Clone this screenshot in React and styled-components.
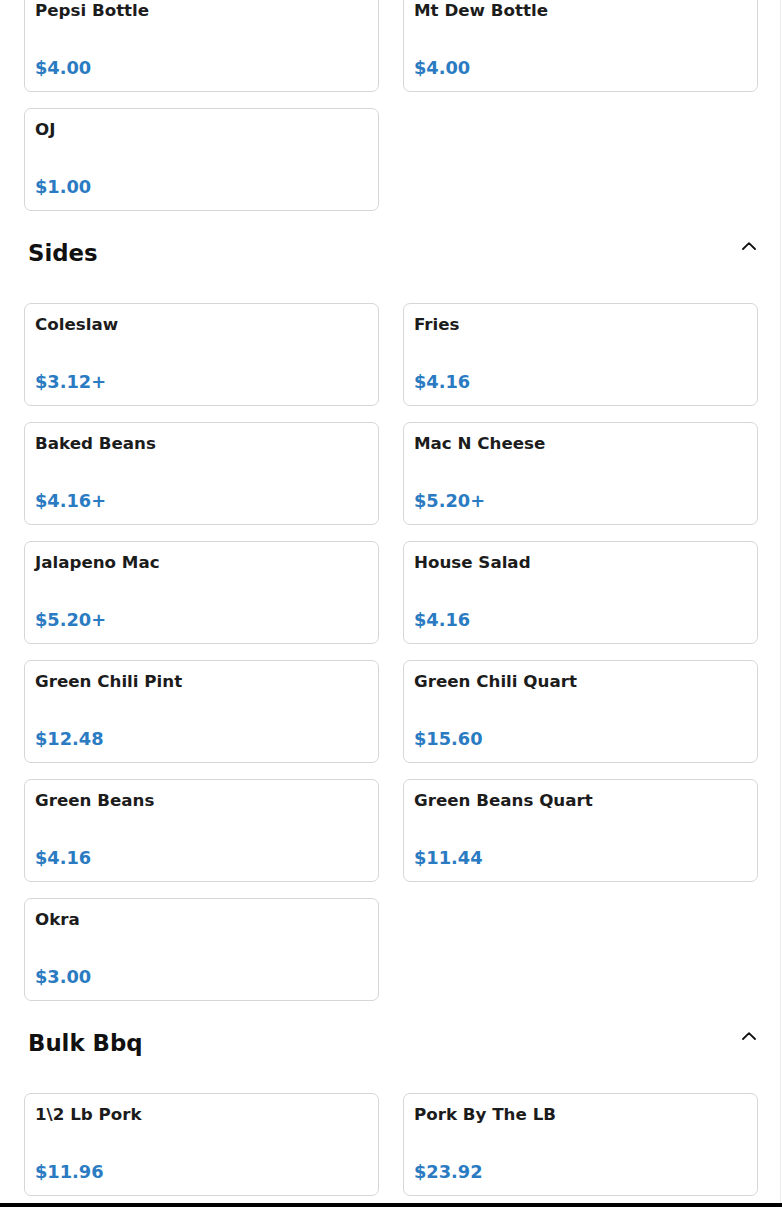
import styled, { createGlobalStyle } from "styled-components";

const GlobalStyle = createGlobalStyle`
  * { box-sizing: border-box; }
  body {
    margin: 0;
    background: #ffffff;
    font-family: "DejaVu Sans", "Liberation Sans", sans-serif;
  }
`;

const Page = styled.div`
  width: 781px;
  border-right: 1px solid #ececec;
  padding: 0 22px 40px 24px;
  margin-top: -11px;
`;

const Section = styled.section`
  &:not(:first-child) {
    margin-top: 28px;
  }
`;

const SectionHead = styled.div`
  display: flex;
  justify-content: space-between;
  align-items: flex-start;
  padding: 0 2px 0 4px;
  margin-bottom: 36px;
`;

const SectionTitle = styled.h2`
  margin: 0;
  font-size: 22.8px;
  line-height: 28px;
  font-weight: bold;
  color: #111;
`;

const Toggle = styled.button`
  border: none;
  background: none;
  padding: 0;
  margin-top: 3px;
  width: 14px;
  height: 8px;
  display: flex;
  cursor: pointer;
`;

const Grid = styled.div`
  display: grid;
  grid-template-columns: 1fr 1fr;
  column-gap: 24px;
  row-gap: 16px;
`;

const Card = styled.div`
  height: 103px;
  border: 1px solid #d6d6d6;
  border-radius: 7px;
  padding: 10px 10px 12px 10px;
  display: flex;
  flex-direction: column;
  background: #fff;
`;

const Name = styled.div`
  font-size: 16.7px;
  line-height: 20px;
  font-weight: bold;
  color: #1c1c1c;
`;

const Price = styled.div`
  margin-top: auto;
  font-size: 17.8px;
  line-height: 22px;
  font-weight: bold;
  color: #2a7bc2;
`;

const BottomBar = styled.div`
  position: fixed;
  left: 0;
  right: 0;
  bottom: 0;
  height: 4px;
  background: #000;
`;

const sections = [
  {
    title: null,
    items: [
      ["Pepsi Bottle", "$4.00"],
      ["Mt Dew Bottle", "$4.00"],
      ["OJ", "$1.00"],
    ],
  },
  {
    title: "Sides",
    items: [
      ["Coleslaw", "$3.12+"],
      ["Fries", "$4.16"],
      ["Baked Beans", "$4.16+"],
      ["Mac N Cheese", "$5.20+"],
      ["Jalapeno Mac", "$5.20+"],
      ["House Salad", "$4.16"],
      ["Green Chili Pint", "$12.48"],
      ["Green Chili Quart", "$15.60"],
      ["Green Beans", "$4.16"],
      ["Green Beans Quart", "$11.44"],
      ["Okra", "$3.00"],
    ],
  },
  {
    title: "Bulk Bbq",
    items: [
      ["1\\2 Lb Pork", "$11.96"],
      ["Pork By The LB", "$23.92"],
    ],
  },
];

function ChevronUp() {
  return (
    <svg width="14" height="8" viewBox="0 0 14 8" fill="none">
      <path d="M1 7 7 1.2 13 7" stroke="#111" strokeWidth="1.8" strokeLinecap="round" strokeLinejoin="round" />
    </svg>
  );
}

export default function App() {
  return (
    <>
      <GlobalStyle />
      <Page>
        {sections.map((s, i) => (
          <Section key={i}>
            {s.title && (
              <SectionHead>
                <SectionTitle>{s.title}</SectionTitle>
                <Toggle aria-label="collapse">
                  <ChevronUp />
                </Toggle>
              </SectionHead>
            )}
            <Grid>
              {s.items.map(([name, price]) => (
                <Card key={name}>
                  <Name>{name}</Name>
                  <Price>{price}</Price>
                </Card>
              ))}
            </Grid>
          </Section>
        ))}
      </Page>
      <BottomBar />
    </>
  );
}
